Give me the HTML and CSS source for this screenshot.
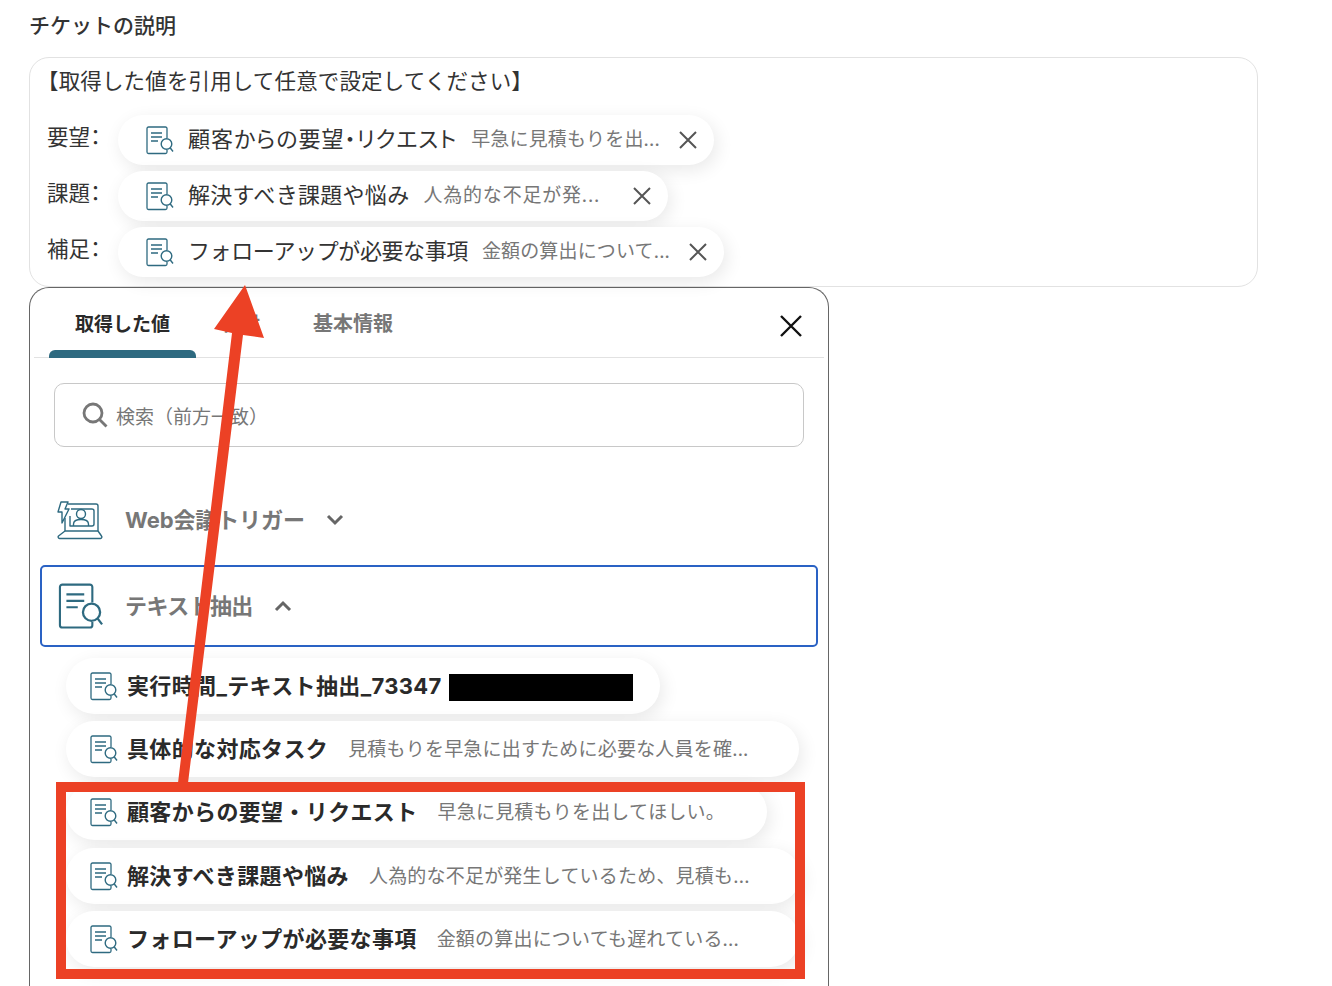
FILE: index.html
```html
<!DOCTYPE html>
<html lang="ja">
<head>
<meta charset="utf-8">
<title>チケットの説明</title>
<link rel="stylesheet" href="styles.css">
</head>
<body>
<svg class="defs" width="0" height="0" aria-hidden="true">
  <symbol id="doc" viewBox="0 0 28 29">
    <path d="M21 12V2.500A1.500 1.500 0 0 0 19.500 1H2.500A1.500 1.500 0 0 0 1 2.500V26A1.500 1.500 0 0 0 2.500 27.500H19.500A1.500 1.500 0 0 0 21 26V24M5 7H16M5 11H16M5 15H12" fill="none" stroke="#2e6a80" stroke-width="1.300"/>
    <circle cx="20.500" cy="18" r="5.300" fill="none" stroke="#2e6a80" stroke-width="1.400"/>
    <path d="M24.300 22L27 25.500" fill="none" stroke="#2e6a80" stroke-width="1.400"/>
  </symbol>
</svg>
<main class="page">
  <h1 class="title">チケットの説明</h1>
  <section class="textbox">
    <p class="lead">【取得した値を引用して任意で設定してください】</p>
    <div class="row">
      <span class="label">要望&#xFF1A;</span>
      <span class="token">
        <svg class="ico"><use href="#doc"/></svg>
        <span class="token-name tight">顧客からの要望・リクエスト</span>
        <span class="token-hint">早急に見積もりを出...</span>
        <svg class="x" viewBox="0 0 20 20"><path d="M2 2L18 18M18 2L2 18"/></svg>
      </span>
    </div>
    <div class="row">
      <span class="label">課題&#xFF1A;</span>
      <span class="token loose">
        <svg class="ico"><use href="#doc"/></svg>
        <span class="token-name">解決すべき課題や悩み</span>
        <span class="token-hint">人為的な不足が発...</span>
        <svg class="x" viewBox="0 0 20 20"><path d="M2 2L18 18M18 2L2 18"/></svg>
      </span>
    </div>
    <div class="row">
      <span class="label">補足&#xFF1A;</span>
      <span class="token">
        <svg class="ico"><use href="#doc"/></svg>
        <span class="token-name narrow">フォローアップが必要な事項</span>
        <span class="token-hint">金額の算出について...</span>
        <svg class="x" viewBox="0 0 20 20"><path d="M2 2L18 18M18 2L2 18"/></svg>
      </span>
    </div>
  </section>
  <section class="panel">
    <div class="tabs">
      <span class="tab active">取得した値</span>
      <span class="tab middle">日付</span>
      <span class="tab last">基本情報</span>
      <svg class="close" viewBox="0 0 24 24"><path d="M2 2L22 22M22 2L2 22"/></svg>
    </div>
    <div class="search">
      <svg class="search-ico" viewBox="0 0 26 26"><circle cx="11" cy="11" r="9"/><path d="M17.500 17.500L24.500 24.500"/></svg>
      <span>検索&#xFF08;前方一致&#xFF09;</span>
    </div>
    <div class="group first">
      <svg class="group-ico" viewBox="0 0 46 40" fill="none" stroke="#2e6a80" stroke-width="1.400" stroke-linejoin="round">
        <path d="M11 4H39A2 2 0 0 1 41 6V31H8V18"/>
        <path d="M14 9H35A2 2 0 0 1 37 11V24A2 2 0 0 1 35 26H13V16"/>
        <path d="M4 2L1 12H5L5 23L12 9H8L11 2Z"/>
        <circle cx="24" cy="14" r="4.500"/>
        <path d="M16.500 26V24C16.500 21 20 19.500 24 19.500S31.500 21 31.500 24V26"/>
        <path d="M8 31L1.500 36A1.500 1.500 0 0 0 2.500 38.500H43.500A1.500 1.500 0 0 0 44.500 36L41 31"/>
      </svg>
      <span class="group-name">Web会議トリガー</span>
      <svg class="chev" viewBox="0 0 18 12"><path d="M2 2L9 9L16 2"/></svg>
    </div>
    <div class="group selected">
      <svg class="group-ico doc-large"><use href="#doc"/></svg>
      <span class="group-name">テキスト抽出</span>
      <svg class="chev" viewBox="0 0 18 12"><path d="M2 10L9 3L16 10"/></svg>
    </div>
    <ul class="items">
      <li class="item"><svg class="ico"><use href="#doc"/></svg><b>実行時間_テキスト抽出_73347</b><span class="redact"></span></li>
      <li class="item"><svg class="ico"><use href="#doc"/></svg><b>具体的な対応タスク</b><span class="hint">見積もりを早急に出すために必要な人員を確...</span></li>
      <li class="item short"><svg class="ico"><use href="#doc"/></svg><b>顧客からの要望・リクエスト</b><span class="hint">早急に見積もりを出してほしい。</span></li>
      <li class="item"><svg class="ico"><use href="#doc"/></svg><b>解決すべき課題や悩み</b><span class="hint">人為的な不足が発生しているため、見積も...</span></li>
      <li class="item wide"><svg class="ico"><use href="#doc"/></svg><b>フォローアップが必要な事項</b><span class="hint">金額の算出についても遅れている...</span></li>
    </ul>
  </section>
  <div class="callout-box"></div>
  <svg class="callout-arrow" viewBox="0 0 1332 986"><polygon points="245,285 264,338 243,335 188,783 178,783 232,333 214,329"/></svg>
</main>
</body>
</html>
```
FILE: styles.css
```css
* { box-sizing: border-box; }
html, body { margin: 0; padding: 0; background: #fff; }
body { font-family: "Noto Sans CJK JP", "Noto Sans", sans-serif; color: #2a2a2a; }
.defs { position: absolute; }
.page { position: relative; width: 1332px; height: 986px; overflow: hidden; padding: 10px 0 0 29px; }
.title { margin: 0 0 18px 0; font-size: 21px; line-height: 29px; font-weight: 500; color: #333; }

.textbox { width: 1229px; height: 230px; border: 1px solid #e2e2e2; border-radius: 20px; padding: 7px 0 0 17px; }
.lead { margin: 0 0 20px -10px; font-size: 21.500px; line-height: 30px; letter-spacing: .15px; color: #333; }
.row { display: flex; align-items: center; height: 50px; margin-bottom: 6px; }
.label { width: 71px; font-size: 21.500px; line-height: 30px; margin-bottom: 9px; font-feature-settings: "palt"; color: #333; white-space: nowrap; }
.token { display: inline-flex; align-items: center; height: 50px; padding: 0 16px 0 28px; background: #fff; border-radius: 25px; box-shadow: 3px 5px 18px rgba(0, 0, 0, .09); white-space: nowrap; }
.ico { flex: none; width: 28px; height: 29px; }
.token-name { margin: 0 0 6px 14px; font-size: 22px; letter-spacing: .3px; color: #333; }
.token-name.tight { font-feature-settings: "palt"; letter-spacing: 1px; }
.token-name.narrow { letter-spacing: -.4px; }
.token-hint { margin: 0 0 6px 14px; font-size: 19px; letter-spacing: .15px; color: #777; }
.x { flex: none; width: 20px; height: 20px; margin-left: 18px; fill: none; stroke: #555; stroke-width: 2; }
.loose .token-hint { letter-spacing: .8px; }
.loose .x { margin-left: 32px; }

.panel { width: 800px; height: 760px; border: 1px solid #666; border-bottom: 0; border-radius: 20px 20px 0 0; background: #fff; padding: 0 4px; }
.tabs { position: relative; display: flex; height: 70px; margin-bottom: 25px; border-bottom: 1px solid #e2e2e2; }
.tab { font-size: 19px; line-height: 70px; font-weight: 700; color: #777; }
.tab.active { position: relative; width: 147px; margin-left: 15px; text-align: center; color: #2a2a2a; }
.tab.active::after { content: ""; position: absolute; left: 0; right: 0; bottom: -1px; height: 8px; background: #2e6a80; border-radius: 6px 6px 0 0; }
.tab.middle { margin-left: 26px; }
.tab.last { margin-left: 53px; font-size: 20px; }
.close { position: absolute; top: 26px; right: 21px; width: 24px; height: 24px; fill: none; stroke: #111; stroke-width: 2.400; }

.search { display: flex; align-items: center; width: 750px; height: 64px; margin: 0 0 43px 20px; padding-left: 27px; border: 1px solid #c8c8c8; border-radius: 10px; font-size: 19px; color: #777; }
.search-ico { width: 26px; height: 26px; margin-right: 8px; fill: none; stroke: #777; stroke-width: 2.800; }

.group { display: flex; align-items: center; height: 82px; margin: 0 6px; padding-left: 17px; }
.group.first { height: 60px; }
.group-ico { flex: none; width: 46px; height: 40px; margin-right: 22px; }
.doc-large { height: 47px; margin-right: 21px; }
.group-name { margin-bottom: 5px; font-family: Inter, "Noto Sans CJK JP", sans-serif; font-size: 22px; font-weight: 700; letter-spacing: -.1px; color: #777; }
.chev { width: 18px; height: 12px; margin-left: 21px; fill: none; stroke: #666; stroke-width: 3; }
.selected { border: 2px solid #2a62c4; border-radius: 5px; margin-top: 15px; padding-left: 16px; }
.selected .group-name { letter-spacing: -.6px; }

.items { list-style: none; margin: 11px 0 0 0; padding: 0 0 0 32px; display: flex; flex-direction: column; align-items: flex-start; gap: 7px; }
.item { display: flex; align-items: center; height: 56px; padding: 0 50px 0 24px; background: #fff; border-radius: 28px; box-shadow: 3px 5px 18px rgba(0, 0, 0, .09); white-space: nowrap; }
.item.short { padding-right: 42px; margin-bottom: 1px; }
.item.wide { min-width: 733px; }
.item b { margin: 0 0 4px 9px; font-family: Inter, "Noto Sans CJK JP", sans-serif; font-size: 22px; font-weight: 700; letter-spacing: .35px; color: #2a2a2a; }
.hint { margin: 0 0 3px 20px; font-size: 19px; letter-spacing: .2px; color: #777; }
.redact { width: 184px; height: 27px; margin: 3px -23px 0 7px; background: #000; }

.callout-box { position: absolute; left: 56px; top: 782px; width: 749px; height: 197px; border: 10px solid #ec4125; }
.callout-arrow { position: absolute; left: 0; top: 0; width: 1332px; height: 986px; fill: #ec4125; pointer-events: none; }
```
